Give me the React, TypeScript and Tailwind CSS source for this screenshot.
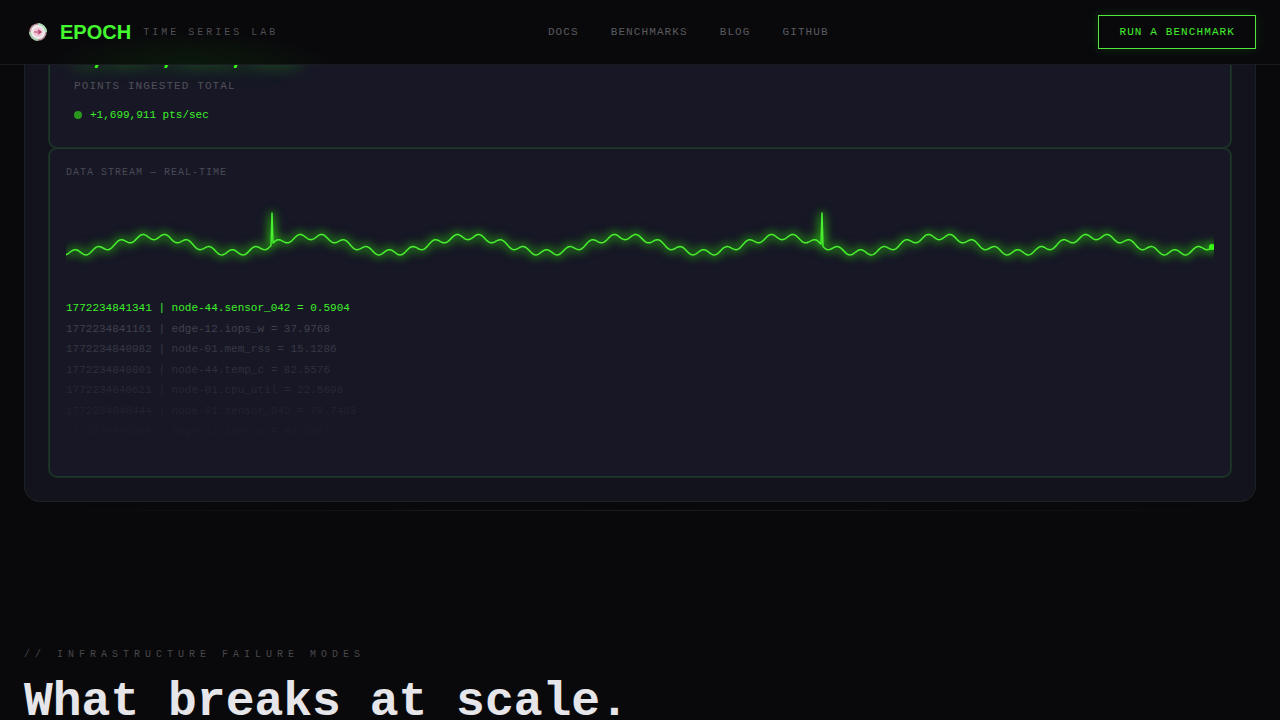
import type { FC } from "react";

const NAV_LINKS = ["Docs", "Benchmarks", "Blog", "GitHub"];

const STREAM = [
    { text: "1772234841341 | node-44.sensor_042 = 0.5904", tone: "text-[#3ff02a]" },
    { text: "1772234841161 | edge-12.iops_w = 37.9768", tone: "text-[#42414d]" },
    { text: "1772234840982 | node-01.mem_rss = 15.1286", tone: "text-[#383744]" },
    { text: "1772234840801 | node-44.temp_c = 82.5576", tone: "text-[#2f2e3b]" },
    { text: "1772234840621 | node-01.cpu_util = 22.5696", tone: "text-[#282734]" },
    { text: "1772234840444 | node-01.sensor_042 = 79.7483", tone: "text-[#22222f]" },
    { text: "1772234840264 | edge-12.iops_w = 41.2087", tone: "text-[#1c1c2a]" },
];

const WAVE_WIDTH = 1148;
const SPIKES = [206, 756];

const waveY = (x: number) => {
    const t = (x - 87.8) * 0.04;
    return 52.7 - 8 * Math.cos(t) + 3 * Math.cos(7 * t);
};

const buildWave = () => {
    const points: string[] = [];
    for (let x = 0; x <= WAVE_WIDTH - 2; x += 1) {
        const y = SPIKES.includes(x) ? 21 : waveY(x);
        points.push(`${x},${y.toFixed(1)}`);
    }
    return points.join(" ");
};

const Logo: FC = () => (
    <svg viewBox="0 0 28 28" className="w-7 h-7" aria-hidden="true">
        <circle cx="14" cy="14" r="8" fill="#eee9ec" />
        <circle cx="14" cy="14" r="8" fill="none" stroke="#b98f98" strokeWidth="1.5" />
        <path d="M14 6a8 8 0 0 1 8 8" fill="none" stroke="#a9e0b4" strokeWidth="2" />
        <path d="M14 22a8 8 0 0 1-8-8" fill="none" stroke="#a5cfae" strokeWidth="2" />
        <circle cx="14" cy="14" r="4.5" fill="#f3c4d3" />
        <path d="M10 14h7M14 12l3 2-3 2" fill="none" stroke="#b0446f" strokeWidth="1.2" />
    </svg>
);

const Header: FC = () => (
    <header className="fixed inset-x-0 top-0 z-10 h-[65px] px-6 flex items-center justify-between bg-[#09090c] bg-[radial-gradient(ellipse_140px_32px_at_190px_100%,#0a180b,#0a120b_50%,transparent)] border-b border-[#1a1a20]">
        <a href="#" className="flex items-center">
            <Logo />
            <span className="ml-2 font-['Liberation_Sans',sans-serif] text-xl font-bold text-[#44fb30]">
                EPOCH
            </span>
            <span className="ml-3 text-[10px] tracking-[3px] text-[#4f4f54]">
                TIME SERIES LAB
            </span>
        </a>
        <nav className="flex gap-8 text-[11px] tracking-widest text-[#5a5a60] uppercase">
            {NAV_LINKS.map((link) => (
                <a key={link} href="#">
                    {link}
                </a>
            ))}
        </nav>
        <button
            type="button"
            className="h-[34px] px-5 border border-[#52e83e] text-[11px] tracking-widest text-[#44ee2e] uppercase shadow-[0_0_10px_rgba(57,255,20,0.15)]"
        >
            Run a benchmark
        </button>
    </header>
);

const CounterCard: FC = () => (
    <div className="p-6 bg-[#171725] rounded-lg border border-[#1d3a26] ring-1 ring-[#1a2c26]">
        <p className="text-[28px] leading-none font-bold tracking-[0.02em] text-[#39ff14] [text-shadow:0_0_20px_rgba(57,255,20,0.7)]">
            1,847,293,105
        </p>
        <p className="mt-2 text-[11px] leading-normal tracking-widest text-[#50505a]">
            POINTS INGESTED TOTAL
        </p>
        <p className="mt-3 flex items-center gap-2 text-[11px] leading-normal text-[#3ff02a]">
            <span className="w-2 h-2 rounded-full bg-[#2a981f]" />
            +1,699,911 pts/sec
        </p>
    </div>
);

const StreamCard: FC = () => (
    <div className="p-4 flex flex-col gap-3 bg-[#171725] rounded-lg border border-[#1d3a26] ring-1 ring-[#1a2c26]">
        <h3 className="text-[10px] leading-normal tracking-widest text-[#4a4a55]">
            DATA STREAM — REAL-TIME
        </h3>
        <svg
            viewBox="0 0 1148 96"
            preserveAspectRatio="none"
            className="w-full h-24 overflow-hidden"
            aria-hidden="true"
        >
            <g className="[filter:drop-shadow(0_0_4px_#2cd010)_drop-shadow(0_0_4px_#24b00c)]">
                <polyline
                    points={buildWave()}
                    fill="none"
                    stroke="#4af030"
                    strokeWidth="1.5"
                    strokeLinejoin="round"
                />
                <circle cx="1146" cy="55" r="3" fill="#39ff14" />
            </g>
        </svg>
        <ul className="h-40 flex flex-col gap-1 overflow-hidden text-[11px] leading-normal">
            {STREAM.map((row) => (
                <li key={row.text} className={row.tone}>
                    {row.text}
                </li>
            ))}
        </ul>
    </div>
);

export default function App() {
    return (
        <div className="h-screen overflow-hidden bg-[#09090b] font-['Liberation_Mono',monospace]">
            <Header />
            <main className="px-6">
                <section className="pt-[17px] px-6 pb-6 bg-[#12131d] rounded-b-2xl border border-t-0 border-[#1a2324]">
                    <CounterCard />
                    <StreamCard />
                </section>
                <div className="mt-2 h-px bg-linear-to-r from-transparent via-[#1a1f1b] to-transparent" />
                <section className="pt-34">
                    <p className="text-[10px] leading-normal tracking-[5px] text-[#48484c]">
                        // INFRASTRUCTURE FAILURE MODES
                    </p>
                    <h2 className="mt-4 text-5xl leading-none font-bold text-[#e6e6ea]">
                        What breaks at scale.
                    </h2>
                </section>
            </main>
        </div>
    );
}
